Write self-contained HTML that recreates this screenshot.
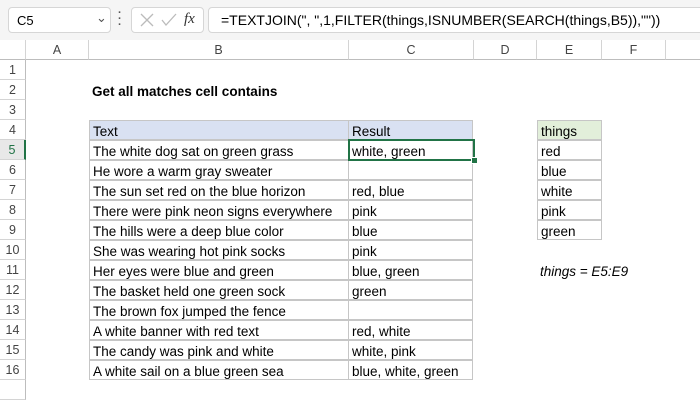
<!DOCTYPE html>
<html><head><style>
body{margin:0;width:700px;height:400px;background:#fff;font-family:"Liberation Sans",Calibri,sans-serif;position:relative;overflow:hidden;font-size:13px;color:#000}
.top{position:absolute;left:0;top:0;width:700px;height:40px;background:#f5f5f5}
.box{position:absolute;background:#fff;border:1px solid #d6d6d6;border-radius:4px}
.ab{position:absolute}
.ch{position:absolute;top:40px;height:20px;line-height:20px;text-align:center;color:#444;font-size:12.5px;border-right:1px solid #d4d4d4;border-bottom:1px solid #bdbdbd;box-sizing:border-box;background:#fff}
.rh{position:absolute;left:0;width:26px;height:20px;line-height:21px;text-align:center;color:#444;font-size:12.5px;border-bottom:1px solid #d4d4d4;border-right:1px solid #bdbdbd;box-sizing:border-box;background:#fff}
.c{position:absolute;height:20px;line-height:21px;padding-left:3px;box-sizing:border-box;border:1px solid #c6c6c6;margin:-1px 0 0 -1px;font-size:13.5px;white-space:nowrap;overflow:hidden}
</style></head><body>
<div class="top"></div>
<div class="box" style="left:8px;top:7px;width:101px;height:24px"><span class="ab" style="left:8px;top:5px">C5</span><span class="ab" style="left:87px;top:2px;color:#555">&#8964;</span></div>
<div class="ab" style="left:118px;top:10px;color:#555;font-weight:bold;line-height:6px;font-size:11px">·<br>·<br>·</div>
<div class="box" style="left:131px;top:7px;width:71px;height:24px">
<svg class="ab" style="left:8px;top:5px" width="40" height="14"><path d="M1 1l12 12M13 1L1 13" stroke="#bbb" stroke-width="1.3"/><path d="M22 7l4 5 10-11" stroke="#bbb" stroke-width="1.3" fill="none"/></svg>
<span class="ab" style="left:52px;top:3px;font-family:'Liberation Serif',serif;font-style:italic;font-size:15px;color:#333">fx</span></div>
<div class="box" style="left:208px;top:7px;width:500px;height:24px"><span class="ab" style="left:12px;top:4px;font-size:14px">=TEXTJOIN(", ",1,FILTER(things,ISNUMBER(SEARCH(things,B5)),""))</span></div>
<div class="ch" style="left:0;width:26px;background:#fff"></div>
<div class="ch" style="left:26px;width:63px">A</div>
<div class="ch" style="left:89px;width:260px">B</div>
<div class="ch" style="left:349px;width:125px">C</div>
<div class="ch" style="left:474px;width:63px">D</div>
<div class="ch" style="left:537px;width:65px">E</div>
<div class="ch" style="left:602px;width:64px">F</div>
<div class="ch" style="left:666px;width:40px"></div>
<div class="rh" style="top:60px">1</div><div class="rh" style="top:80px">2</div><div class="rh" style="top:100px">3</div><div class="rh" style="top:120px">4</div>
<div class="rh" style="top:140px;background:#e8e8e8;border-right:2px solid #217346;color:#217346">5</div>
<div class="rh" style="top:160px">6</div><div class="rh" style="top:180px">7</div><div class="rh" style="top:200px">8</div><div class="rh" style="top:220px">9</div><div class="rh" style="top:240px">10</div><div class="rh" style="top:260px">11</div><div class="rh" style="top:280px">12</div><div class="rh" style="top:300px">13</div><div class="rh" style="top:320px">14</div><div class="rh" style="top:340px">15</div><div class="rh" style="top:360px">16</div><div class="rh" style="top:380px"></div>
<div class="ab" style="left:92px;top:84px;font-weight:bold;font-size:13.5px">Get all matches cell contains</div>
<div class="c" style="left:90px;top:121px;width:260px;background:#d9e1f2">Text</div><div class="c" style="left:349px;top:121px;width:125px;background:#d9e1f2">Result</div>
<div class="c" style="left:90px;top:141px;width:260px">The white dog sat on green grass</div><div class="c" style="left:349px;top:141px;width:125px">white, green</div>
<div class="c" style="left:90px;top:161px;width:260px">He wore a warm gray sweater</div><div class="c" style="left:349px;top:161px;width:125px"></div>
<div class="c" style="left:90px;top:181px;width:260px">The sun set red on the blue horizon</div><div class="c" style="left:349px;top:181px;width:125px">red, blue</div>
<div class="c" style="left:90px;top:201px;width:260px">There were pink neon signs everywhere</div><div class="c" style="left:349px;top:201px;width:125px">pink</div>
<div class="c" style="left:90px;top:221px;width:260px">The hills were a deep blue color</div><div class="c" style="left:349px;top:221px;width:125px">blue</div>
<div class="c" style="left:90px;top:241px;width:260px">She was wearing hot pink socks</div><div class="c" style="left:349px;top:241px;width:125px">pink</div>
<div class="c" style="left:90px;top:261px;width:260px">Her eyes were blue and green</div><div class="c" style="left:349px;top:261px;width:125px">blue, green</div>
<div class="c" style="left:90px;top:281px;width:260px">The basket held one green sock</div><div class="c" style="left:349px;top:281px;width:125px">green</div>
<div class="c" style="left:90px;top:301px;width:260px">The brown fox jumped the fence</div><div class="c" style="left:349px;top:301px;width:125px"></div>
<div class="c" style="left:90px;top:321px;width:260px">A white banner with red text</div><div class="c" style="left:349px;top:321px;width:125px">red, white</div>
<div class="c" style="left:90px;top:341px;width:260px">The candy was pink and white</div><div class="c" style="left:349px;top:341px;width:125px">white, pink</div>
<div class="c" style="left:90px;top:361px;width:260px">A white sail on a blue green sea</div><div class="c" style="left:349px;top:361px;width:125px">blue, white, green</div>
<div class="ab" style="left:348px;top:139px;width:123px;height:18px;border:2px solid #217346"></div>
<div class="ab" style="left:471px;top:157px;width:5px;height:5px;background:#217346;border:1px solid #fff"></div>
<div class="c" style="left:538px;top:121px;width:65px;background:#e2efda">things</div>
<div class="c" style="left:538px;top:141px;width:65px">red</div>
<div class="c" style="left:538px;top:161px;width:65px">blue</div>
<div class="c" style="left:538px;top:181px;width:65px">white</div>
<div class="c" style="left:538px;top:201px;width:65px">pink</div>
<div class="c" style="left:538px;top:221px;width:65px">green</div>
<div class="ab" style="left:540px;top:264px;font-style:italic;font-size:13.5px">things = E5:E9</div>
</body></html>
